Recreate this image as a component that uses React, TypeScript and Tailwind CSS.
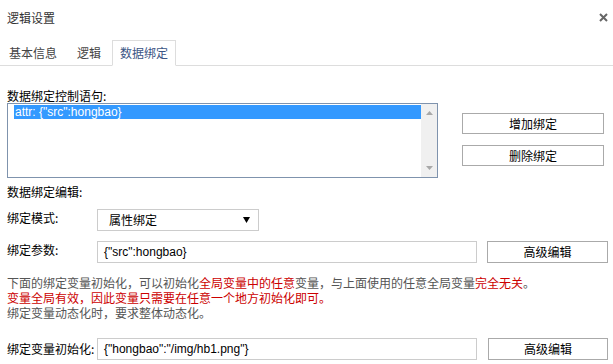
import React from "react";

const cjk = { fontFamily: '"Noto Sans CJK SC", "Liberation Sans", sans-serif' };
const latin = { fontFamily: '"Liberation Sans", "Noto Sans CJK SC", sans-serif' };

export default function App() {
  return (
    <div className="w-[613px] h-[364px] bg-white relative overflow-hidden text-[12px] text-[#333]" style={cjk}>
      {/* title bar */}
      <div className="h-[40px] flex items-center pl-[7px] pb-[4px] text-[12px] text-[#333]">逻辑设置</div>
      <button className="absolute left-[596px] top-[10px] w-[14px] h-[14px] flex items-center justify-center" aria-label="close">
        <svg width="9" height="9" viewBox="0 0 9 9">
          <path d="M1 1 L8 8 M8 1 L1 8" stroke="#666" strokeWidth="2" />
        </svg>
      </button>

      {/* tabs */}
      <div className="h-[26px] flex items-end border-b border-[#ddd]">
        <div className="h-[25px] px-[9px] flex items-center text-[#444]">基本信息</div>
        <div className="h-[25px] ml-px px-[10px] flex items-center text-[#444]">逻辑</div>
        <div className="h-[26px] w-[64px] ml-px -mb-px flex items-center justify-center border border-[#ddd] border-b-white bg-white text-[#3b5585]">数据绑定</div>
      </div>

      {/* content */}
      <div className="pl-[7px] pt-[22px]">
        <div className="flex">
          <div className="w-[431px]">
            <div className="h-[15px] leading-[15px] text-black">数据绑定控制语句:</div>
            <div className="h-[75px] border border-[#7f93ad] flex">
              <div className="flex-1 pl-[6px] pt-[1px]">
                <div className="h-[14px] bg-[#3399ff] text-white leading-[14px] pl-px" style={latin}>attr: {'{"src":hongbao}'}</div>
              </div>
              <div className="w-[16px] bg-[#f0f0f0] flex flex-col justify-between items-center py-[7px]">
                <svg width="7" height="4" viewBox="0 0 7 4"><path d="M0 4 L3.5 0 L7 4 Z" fill="#a8a8a8" /></svg>
                <svg width="7" height="4" viewBox="0 0 7 4"><path d="M0 0 L3.5 4 L7 0 Z" fill="#a8a8a8" /></svg>
              </div>
            </div>
          </div>
          <div className="ml-[24px] pt-[25px] flex flex-col gap-[11px]">
            <button className="w-[142px] h-[21px] border border-[#aaa] bg-white text-black text-[12px] flex items-center justify-center">增加绑定</button>
            <button className="w-[142px] h-[21px] border border-[#aaa] bg-white text-black text-[12px] flex items-center justify-center">删除绑定</button>
          </div>
        </div>

        <div className="mt-[6px] h-[15px] leading-[15px] text-black">数据绑定编辑:</div>

        <div className="flex items-center mt-[10px] h-[22px]">
          <div className="w-[90px] -mt-[4px] text-black">绑定模式:</div>
          <div className="w-[162px] h-[22px] border border-[#ccc] flex items-center justify-between pl-[11px] pr-[8px] text-black">
            <span>属性绑定</span>
            <svg width="7" height="6" viewBox="0 0 7 6"><path d="M0 0 L7 0 L3.5 6 Z" fill="#000" /></svg>
          </div>
        </div>

        <div className="flex items-center mt-[10px] h-[22px]">
          <div className="w-[90px] -mt-[4px] text-black">绑定参数:</div>
          <div className="w-[380px] h-[22px] border border-[#ccc] flex items-center pl-[6px] text-black" style={latin}>{'{"src":hongbao}'}</div>
          <button className="ml-[10px] w-[121px] h-[22px] border border-[#aaa] bg-white text-black text-[12px] flex items-center justify-center">高级编辑</button>
        </div>

        <div className="mt-[12px] leading-[15px] text-[#555]">
          <div className="h-[15px]">
            下面的绑定变量初始化，可以初始化<span className="text-[#cc0000]">全局变量中的任意</span>变量，与上面使用的任意全局变量<span className="text-[#cc0000]">完全无关</span>。
          </div>
          <div className="h-[15px] text-[#cc0000]">变量全局有效，因此变量只需要在任意一个地方初始化即可。</div>
          <div className="h-[15px]">绑定变量动态化时，要求整体动态化。</div>
        </div>

        <div className="flex items-center mt-[18px] h-[22px]">
          <div className="w-[90px] text-black">绑定变量初始化:</div>
          <div className="w-[380px] h-[22px] border border-[#ccc] flex items-center pl-[6px] text-black" style={latin}>{'{"hongbao":"/img/hb1.png"}'}</div>
          <button className="ml-[11px] w-[120px] h-[22px] border border-[#aaa] bg-white text-black text-[12px] flex items-center justify-center">高级编辑</button>
        </div>
      </div>
    </div>
  );
}
